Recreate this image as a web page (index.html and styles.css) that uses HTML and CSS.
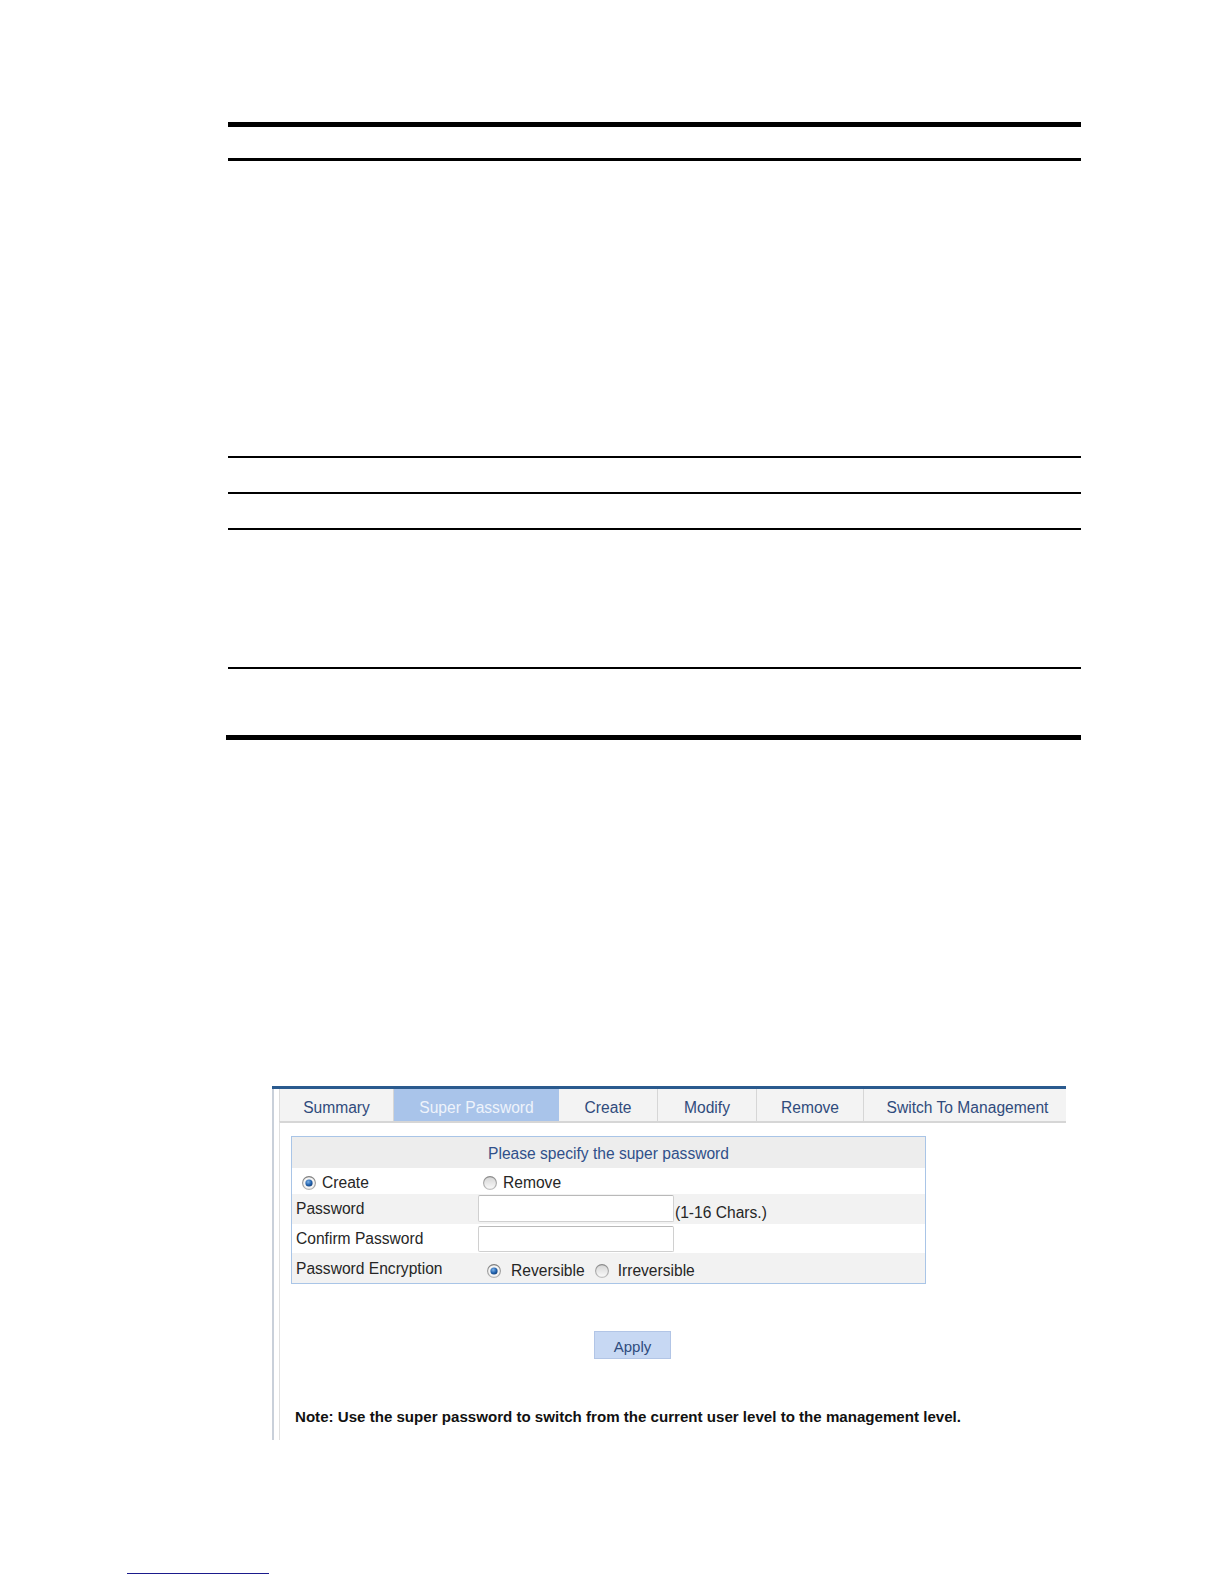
FILE: index.html
```html
<!DOCTYPE html>
<html>
<head>
<meta charset="utf-8">
<link rel="stylesheet" href="styles.css">
</head>
<body>
<div class="page">
  <div class="doc-table">
    <div class="rule-thick"></div>
    <div class="row row-head"></div>
    <div class="row row-a"></div>
    <div class="row row-b"></div>
    <div class="row row-c"></div>
    <div class="row row-d"></div>
    <div class="row row-e"></div>
    <div class="rule-thick rule-bottom"></div>
  </div>

  <div class="shot">
    <div class="shot-body">
      <div class="tabs">
        <div class="tab tab-first" style="width:115px">Summary</div>
        <div class="tab tab-active" style="width:165px">Super Password</div>
        <div class="tab" style="width:99px">Create</div>
        <div class="tab" style="width:99px">Modify</div>
        <div class="tab" style="width:107px">Remove</div>
        <div class="tab tab-last" style="width:202px">Switch To Management</div>
      </div>
      <div class="panel">
        <div class="form">
          <div class="form-head">Please specify the super password</div>
          <div class="frow frow-create">
            <div class="fcell fcell-create">
              <svg class="radio" viewBox="0 0 14 14" width="14" height="14">
                <defs>
                  <linearGradient id="ring1" x1="0" y1="0" x2="0" y2="1"><stop offset="0" stop-color="#7d7d7d"/><stop offset="1" stop-color="#b5b5b5"/></linearGradient>
                  <radialGradient id="dot1" cx="0.4" cy="0.35" r="0.7"><stop offset="0" stop-color="#7fb3e8"/><stop offset="0.6" stop-color="#2162ae"/><stop offset="1" stop-color="#143f78"/></radialGradient>
                </defs>
                <circle cx="7" cy="7" r="6.4" fill="#f4f4f4" stroke="url(#ring1)" stroke-width="1.1"/>
                <circle cx="7" cy="7" r="3.6" fill="url(#dot1)"/>
              </svg>
              <span class="rtext">Create</span>
            </div>
            <div class="fcell fcell-remove">
              <svg class="radio" viewBox="0 0 14 14" width="14" height="14">
                <defs>
                  <linearGradient id="ring2" x1="0" y1="0" x2="0" y2="1"><stop offset="0" stop-color="#8a8a8a"/><stop offset="1" stop-color="#c0c0c0"/></linearGradient>
                  <linearGradient id="fill2" x1="0" y1="0" x2="0" y2="1"><stop offset="0" stop-color="#d4d4d4"/><stop offset="1" stop-color="#fbfbfb"/></linearGradient>
                </defs>
                <circle cx="7" cy="7" r="6.4" fill="url(#fill2)" stroke="url(#ring2)" stroke-width="1.1"/>
              </svg>
              <span class="rtext">Remove</span>
            </div>
          </div>
          <div class="frow frow-grey frow-pass">
            <div class="flabel">Password</div>
            <div class="fcell fcell-input">
              <div class="input"></div>
              <span class="hint">(1-16 Chars.)</span>
            </div>
          </div>
          <div class="frow frow-confirm">
            <div class="flabel">Confirm Password</div>
            <div class="fcell fcell-input2">
              <div class="input input2"></div>
            </div>
          </div>
          <div class="frow frow-grey frow-enc">
            <div class="flabel flabel-enc">Password Encryption</div>
            <div class="fcell fcell-enc">
              <svg class="radio" viewBox="0 0 14 14" width="14" height="14">
                <defs>
                  <linearGradient id="ring3" x1="0" y1="0" x2="0" y2="1"><stop offset="0" stop-color="#7d7d7d"/><stop offset="1" stop-color="#b5b5b5"/></linearGradient>
                  <radialGradient id="dot3" cx="0.4" cy="0.35" r="0.7"><stop offset="0" stop-color="#7fb3e8"/><stop offset="0.6" stop-color="#2162ae"/><stop offset="1" stop-color="#143f78"/></radialGradient>
                </defs>
                <circle cx="7" cy="7" r="6.4" fill="#f4f4f4" stroke="url(#ring3)" stroke-width="1.1"/>
                <circle cx="7" cy="7" r="3.6" fill="url(#dot3)"/>
              </svg>
              <span class="rtext rtext-rev">Reversible</span>
              <svg class="radio" viewBox="0 0 14 14" width="14" height="14">
                <defs>
                  <linearGradient id="ring4" x1="0" y1="0" x2="0" y2="1"><stop offset="0" stop-color="#8a8a8a"/><stop offset="1" stop-color="#c0c0c0"/></linearGradient>
                  <linearGradient id="fill4" x1="0" y1="0" x2="0" y2="1"><stop offset="0" stop-color="#d4d4d4"/><stop offset="1" stop-color="#fbfbfb"/></linearGradient>
                </defs>
                <circle cx="7" cy="7" r="6.4" fill="url(#fill4)" stroke="url(#ring4)" stroke-width="1.1"/>
              </svg>
              <span class="rtext rtext-irr">Irreversible</span>
            </div>
          </div>
        </div>
        <div class="apply">Apply</div>
        <div class="note">Note: Use the super password to switch from the current user level to the management level.</div>
      </div>
    </div>
  </div>

  <div class="footer-line"></div>
</div>
</body>
</html>
```

FILE: styles.css
```css
html, body {
  margin: 0;
  padding: 0;
  background: #ffffff;
}

body {
  font-family: "Liberation Sans", Arial, sans-serif;
  color: #222222;
}

.page {
  width: 1224px;
  height: 1584px;
  padding-top: 122px;
  box-sizing: border-box;
  overflow: hidden;
}

/* ---------- document table (rules only) ---------- */
.doc-table {
  margin-left: 228px;
  width: 853px;
}

.rule-thick {
  height: 5px;
  background: #000000;
}

.rule-bottom {
  margin-left: -2px;
  width: 855px;
}

.row {
  border-bottom: 2px solid #000000;
}

.row-head {
  height: 31px;
  border-bottom-width: 3px;
}

.row-a { height: 295px; }
.row-b { height: 34px; }
.row-c { height: 34px; }
.row-d { height: 137px; }
.row-e { height: 66px; border-bottom: none; }

/* ---------- UI screenshot ---------- */
.shot {
  margin-top: 346px;
  margin-left: 272px;
  width: 794px;
  border-top: 3px solid #2a5a8e;
}

.shot-body {
  height: 351px;
  border-left: 2px solid #c9d0da;
  box-sizing: border-box;
  overflow: hidden;
  font-size: 15.6px;
}

.tabs {
  display: flex;
  margin-left: 5px;
  height: 32px;
}

.tab {
  box-sizing: border-box;
  height: 32px;
  padding-top: 6px;
  line-height: 26px;
  text-align: center;
  background: #f3f3f3;
  border-right: 1px solid #d6d6d6;
  color: #304b7c;
  white-space: nowrap;
}

.tab-first {
  border-left: 1px solid #dcdcdc;
}

.tab-active {
  background: #a9c4ea;
  color: #eef3fb;
  border-right: none;
}

.tab-last {
  border-right: none;
  padding-left: 5px;
}

.panel {
  margin-left: 5px;
  height: 319px;
  border-left: 1px solid #e0e0e0;
  border-top: 2px solid #d6d6d6;
  padding-top: 13px;
  box-sizing: border-box;
}

.form {
  margin-left: 11px;
  width: 635px;
  border: 1px solid #a9c5e7;
  box-sizing: border-box;
}

.form-head {
  height: 31px;
  line-height: 31px;
  padding-top: 1px;
  box-sizing: border-box;
  text-align: center;
  background: #ededed;
  color: #30508a;
}

.frow {
  display: grid;
  grid-template-columns: 186px 1fr;
  align-items: center;
  background: #ffffff;
  box-sizing: border-box;
}

.frow-grey {
  background: #f2f2f2;
}

.frow-create { height: 26px; padding-top: 4px; }
.frow-pass { height: 30px; align-items: start; }
.frow-confirm { height: 29px; align-items: start; }
.frow-enc { height: 30px; padding-top: 6px; }

.flabel {
  padding-left: 4px;
  color: #262626;
  white-space: nowrap;
}

.frow-pass .flabel { padding-top: 6px; }
.frow-confirm .flabel { padding-top: 6px; }
.flabel-enc { margin-top: -4px; }

.fcell {
  display: flex;
  align-items: center;
  color: #262626;
}

.fcell-create { padding-left: 10px; }
.fcell-remove { padding-left: 5px; }

.radio {
  flex: none;
  display: block;
}

.rtext {
  margin-left: 6px;
}

.fcell-enc { padding-left: 9px; }
.rtext-rev { margin-left: 10px; margin-right: 10px; }
.rtext-irr { margin-left: 9px; }

.fcell-input {
  align-items: flex-end;
  padding-top: 1px;
}

.fcell-input2 {
  padding-top: 2px;
}

.input {
  width: 196px;
  height: 27px;
  box-sizing: border-box;
  background: #ffffff;
  border: 1px solid #d0d0d0;
  border-top-color: #b9b9b9;
  border-radius: 2px;
}

.input2 {
  height: 26px;
}

.hint {
  margin-left: 1px;
  margin-bottom: 0;
  line-height: 18px;
}

.apply {
  margin-top: 47px;
  margin-left: 314px;
  width: 77px;
  height: 28px;
  box-sizing: border-box;
  background: #c7d8f3;
  border: 1px solid #b2c5e6;
  color: #2f4c7e;
  font-size: 15px;
  line-height: 28px;
  padding-top: 1px;
  text-align: center;
}

.note {
  margin-top: 49px;
  margin-left: 15px;
  font-size: 15.1px;
  font-weight: bold;
  line-height: 18px;
  color: #111111;
  white-space: nowrap;
}

/* ---------- footer link rule ---------- */
.footer-line {
  margin-top: 133px;
  margin-left: 127px;
  width: 142px;
  height: 0;
  border-top: 1.5px solid #1b1b8c;
}
```
